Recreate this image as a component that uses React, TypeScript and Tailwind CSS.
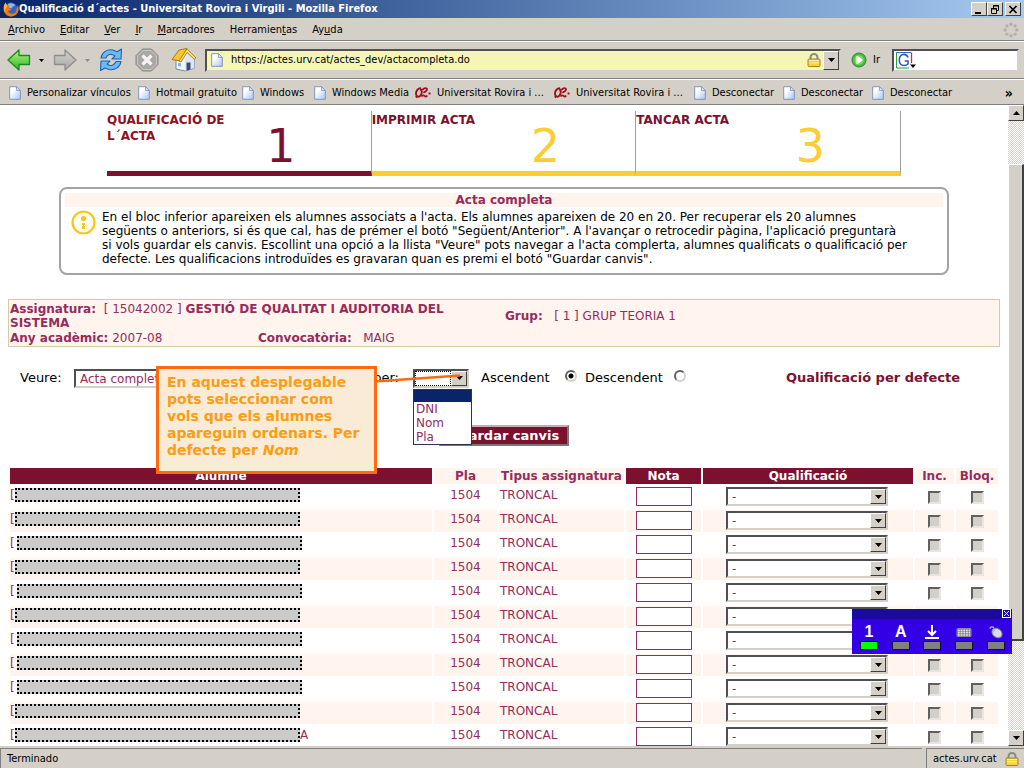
import React from "react";

const raised = "border border-t-white border-l-white border-r-[#404040] border-b-[#404040] bg-[#d4d0c8]";
const sunken = "border-2 border-t-[#505050] border-l-[#505050] border-r-[#d4d0c8] border-b-[#d4d0c8]";

function PageIcon() {
  return (
    <svg viewBox="0 0 12 14" className="h-[14px] w-3 shrink-0" aria-hidden="true">
      <defs>
        <linearGradient id="sheet" x1="0" y1="0" x2="1" y2="1">
          <stop offset="0.3" stopColor="#fff" />
          <stop offset="1" stopColor="#a9c4f2" />
        </linearGradient>
      </defs>
      <path d="M.7.7h6.8l3.8 3.8v8.8H.7z" fill="url(#sheet)" stroke="#7f93c4" strokeWidth="1" />
      <path d="M7.5.7v3.8h3.8z" fill="#dfe9fb" stroke="#7f93c4" strokeWidth=".8" />
    </svg>
  );
}

function UrvIcon() {
  return (
    <svg viewBox="0 0 16 12" className="h-3 w-4 shrink-0" fill="none" stroke="#a00f1c" aria-hidden="true">
      <path d="M6 1.2C3 1 .8 4 1 7c.2 3 3 3.500 4.500 1.500C7 6.500 7.500 2.500 5 2.200M.8 10.500l2-2" strokeWidth="1.900" />
      <path d="M7.500 3c1-2.300 4.700-2.500 4.500-.5-.2 1.800-2.500 2.800-3.700 3.200M6.500 9.500c1-1.500 2-1.500 3-.6s2 .8 2.700-.3M13.500 6.500h2" strokeWidth="1.800" />
    </svg>
  );
}

function LockIcon() {
  return (
    <svg viewBox="0 0 14 14" className="h-[14px] w-[14px] shrink-0" aria-hidden="true">
      <path d="M3.500 7V4.200a3.500 3.200 0 0 1 7 0V7" fill="none" stroke="#8a8a8a" strokeWidth="2" />
      <rect x="1" y="6" width="12" height="7.500" rx="1" fill="#f4d33c" stroke="#a8841a" />
      <path d="M2 7.500h10M2 9.800h10" stroke="#fdf0a0" strokeWidth="1" />
    </svg>
  );
}

function FirefoxIcon() {
  return (
    <svg viewBox="0 0 16 16" className="h-4 w-4 shrink-0" aria-hidden="true">
      <circle cx="8" cy="8" r="6.500" fill="#3a63b8" />
      <path d="M5 3c2-1 5-1 7 1-1 2-3 1-3 3-2 1-4 0-4-4z" fill="#8db9ee" />
      <path d="M2.500 1.500C0 5-.5 10 3 13.500c3.500 3.200 9 2.500 11.500-1.500 1.500-2.500 1.500-6 0-8.500.2 2-.3 3.500-1 4.500.2 3-2 5-4.800 4.800C6 12.500 5 11 5.200 9.500 6.500 10 8 9.500 8.500 8.500 6.500 8 5.500 6.500 6 5 4.500 4.500 3 3.500 2.500 1.500z" fill="#ef7a1a" />
      <path d="M2.500 1.500C.5 5 .5 9 2.500 11.500 2 8 3 6.500 4.500 5.500z" fill="#fbc02d" />
    </svg>
  );
}

function Caret({ dim }: { dim?: boolean }) {
  return (
    <svg viewBox="0 0 5 3" className="h-[3px] w-[5px] shrink-0" aria-hidden="true">
      <path d="M0 0h5L2.500 3z" fill={dim ? "#8d8a84" : "#000"} />
    </svg>
  );
}

function ArrowGlyph({ up }: { up?: boolean }) {
  return (
    <svg viewBox="0 0 7 4" className="h-1 w-[7px]" aria-hidden="true">
      <path d={up ? "M0 4h7L3.500 0z" : "M0 0h7L3.500 4z"} fill="#000" />
    </svg>
  );
}

function NavArrow({ back }: { back?: boolean }) {
  return (
    <svg viewBox="0 0 24 22" className="h-[22px] w-6" aria-hidden="true">
      <defs>
        <linearGradient id="green" x1="0" y1="0" x2="0" y2="1">
          <stop offset="0" stopColor="#b4f28c" />
          <stop offset="1" stopColor="#31b61e" />
        </linearGradient>
        <linearGradient id="grey" x1="0" y1="0" x2="0" y2="1">
          <stop offset="0" stopColor="#d2d0cc" />
          <stop offset="1" stopColor="#aaa8a4" />
        </linearGradient>
      </defs>
      {back ? (
        <path d="M1 11 12 1v5.500h10.500v9H12V21z" fill="url(#green)" stroke="#198a1c" strokeWidth="1.300" strokeLinejoin="round" />
      ) : (
        <path d="M23 11 12 1v5.500H1.500v9H12V21z" fill="url(#grey)" stroke="#8f8d89" strokeWidth="1.300" strokeLinejoin="round" />
      )}
    </svg>
  );
}

function ReloadIcon() {
  return (
    <svg viewBox="0 0 24 24" className="h-6 w-6" fill="#6bbcf5" stroke="#1f62b4" strokeWidth="1.100" strokeLinejoin="round" aria-hidden="true">
      <path d="M2 10C3 4 8 1 14 2l4 1.800L22.500 1 22 11H13l3-3.200C12 5 8 6.500 7 10z" />
      <path d="M22 13.500c-1 6-6.500 9-12 8L6 20l-4.500 2.500L2 13h9l-3 3.200c4 2.500 7.500 1 9-2.700z" />
    </svg>
  );
}

function StopIcon() {
  return (
    <svg viewBox="0 0 24 24" className="h-6 w-6" aria-hidden="true">
      <path d="M7.500 1h9L23 7.500v9L16.500 23h-9L1 16.500v-9z" fill="#a9a7a4" stroke="#8a8886" />
      <path d="M8 2.500h8L21.500 8v8L16 21.500H8L2.500 16V8z" fill="none" stroke="#c9c7c4" />
      <path d="m7.500 7.500 9 9m0-9-9 9" stroke="#f4f3f1" strokeWidth="3.200" />
    </svg>
  );
}

function HomeIcon() {
  return (
    <svg viewBox="0 0 26 24" className="h-6 w-[26px]" aria-hidden="true">
      <path d="M5 12v9l9 2 9.500-3V10L16 4z" fill="#f1f5fc" stroke="#7787a8" />
      <path d="m14 23 9.500-3V10L17 4l-3 6z" fill="#d6e1f3" opacity=".8" />
      <path d="M1 11.500 8 2l8-1.500-7 12.500z" fill="#f7c62e" stroke="#a97a12" strokeLinejoin="round" />
      <path d="M8 13 16 .8 25 10l-1.800 1.200L16 4.500 10 14z" fill="#fbe27a" stroke="#a97a12" strokeWidth=".9" strokeLinejoin="round" />
      <path d="M15.500 14.500h4v7l-4 1.300z" fill="#3e4c70" />
      <path d="M7 15h3v3.500l-3-.5z" fill="#8fb3e6" />
    </svg>
  );
}

function GoIcon() {
  return (
    <svg viewBox="0 0 16 16" className="h-4 w-4" aria-hidden="true">
      <circle cx="8" cy="8" r="7" fill="#4cb83c" stroke="#2a8a2a" />
      <circle cx="8" cy="8" r="4.800" fill="#7fd468" />
      <path d="M6 4.300 11 8l-5 3.700z" fill="#f6fff2" stroke="#f6fff2" strokeWidth="1.200" strokeLinejoin="round" />
    </svg>
  );
}

function GoogleIcon() {
  return (
    <svg viewBox="0 0 21 17" className="h-[17px] w-[21px] shrink-0" aria-hidden="true">
      <path d="M.5 16V.5H15" fill="none" stroke="#3a62c8" />
      <path d="M.5.5V16H13" fill="none" stroke="#2d9a3f" />
      <path d="M15.500.5V11" stroke="#d32f2f" strokeWidth="1.300" />
      <path d="M12 5.500C11 2.500 8.500 2.200 7 2.500 4.500 3 3.200 5.500 3.300 8.500c.2 3 2 5 4.700 5 1.800 0 3.200-.6 4-1.500V9H8.800" fill="none" stroke="#2a55c4" strokeWidth="1.500" />
      <path d="M14 12.500h6L17 16z" fill="#000" />
    </svg>
  );
}

function Throbber() {
  const dots = [0, 45, 90, 135, 180, 225, 270, 315];
  return (
    <svg viewBox="0 0 16 16" className="h-4 w-4" aria-hidden="true">
      {dots.map((a) => (
        <circle key={a} cx={8 + 5.8 * Math.cos((a * Math.PI) / 180)} cy={8 + 5.8 * Math.sin((a * Math.PI) / 180)} r="1.700" fill="#b3b0aa" />
      ))}
    </svg>
  );
}

function TitleBar() {
  const btn = "flex h-[14px] w-4 items-center justify-center " + raised;
  return (
    <header className="flex h-[18px] shrink-0 items-center bg-linear-to-r from-[#0a246a] to-[#a6caf0] px-[3px] text-white">
      <FirefoxIcon />
      <h1 className="flex-1 truncate font-bold">Qualificació d´actes - Universitat Rovira i Virgili - Mozilla Firefox</h1>
      <button aria-label="Minimitza" className={btn}>
        <svg viewBox="0 0 10 9" className="h-[9px] w-[10px]"><path d="M1 7h6v2H1z" fill="#000" /></svg>
      </button>
      <button aria-label="Restaura" className={btn}>
        <svg viewBox="0 0 10 9" className="h-[9px] w-[10px]" fill="none" stroke="#000">
          <path d="M3.500 3V.5h5v5H7M3 1h6M1.500 3.500h5v5h-5zM1 4h6" />
        </svg>
      </button>
      <button aria-label="Tanca" className={btn + " ml-0.5"}>
        <svg viewBox="0 0 10 9" className="h-[9px] w-[10px]"><path d="m1.500 1 7 7m0-7-7 7" stroke="#000" strokeWidth="1.700" /></svg>
      </button>
    </header>
  );
}

const menus: [string, string, string][] = [
  ["", "A", "rchivo"],
  ["", "E", "ditar"],
  ["", "V", "er"],
  ["", "I", "r"],
  ["", "M", "arcadores"],
  ["Herramien", "t", "as"],
  ["Ay", "u", "da"],
];

function MenuBar() {
  return (
    <nav className="flex h-[23px] shrink-0 items-center border-b border-[#808080] pt-0.5 pr-[5px] pl-2">
      <div className="flex flex-1 gap-[15px]">
        {menus.map(([a, b, c]) => (
          <button key={a + b + c}>
            {a}
            <span className="underline">{b}</span>
            {c}
          </button>
        ))}
      </div>
      <Throbber />
    </nav>
  );
}

function ToolBar() {
  return (
    <div className="flex h-[38px] shrink-0 items-center border-t border-b border-t-white border-b-[#808080] pr-[5px] pl-[7px]">
      <button aria-label="Enrere" className="flex items-center gap-2"><NavArrow back /><Caret /></button>
      <button aria-label="Endavant" className="ml-[9px] flex items-center gap-2"><NavArrow /><Caret dim /></button>
      <button aria-label="Actualitza" className="ml-[9px]"><ReloadIcon /></button>
      <button aria-label="Atura" className="ml-3"><StopIcon /></button>
      <button aria-label="Inici" className="ml-3"><HomeIcon /></button>
      <div className={"ml-2 flex h-[23px] flex-1 items-center bg-[#f5f5b5] pl-1 " + sunken}>
        <PageIcon />
        <input aria-label="Adreça" defaultValue="https://actes.urv.cat/actes_dev/actacompleta.do" className="ml-2 min-w-0 flex-1 bg-transparent outline-none" />
        <LockIcon />
        <button aria-label="Historial" className={"ml-0.5 flex h-[19px] w-4 items-center justify-center " + raised}><ArrowGlyph /></button>
      </div>
      <button className="ml-2.5 flex items-center gap-1.5"><GoIcon />Ir</button>
      <div className={"ml-3 flex h-[23px] w-[127px] items-center bg-white pl-0.5 " + sunken}>
        <GoogleIcon />
        <input aria-label="Cerca" className="min-w-0 flex-1 bg-transparent outline-none" />
      </div>
    </div>
  );
}

const bookmarks = [
  { label: "Personalizar vínculos", box: "w-[129px]" },
  { label: "Hotmail gratuito", box: "w-[104px]" },
  { label: "Windows", box: "w-[72px]" },
  { label: "Windows Media", box: "w-[101px]" },
  { label: "Universitat Rovira i ...", box: "w-[139px]", urv: true },
  { label: "Universitat Rovira i ...", box: "w-[140px]", urv: true },
  { label: "Desconectar", box: "w-[89px]" },
  { label: "Desconectar", box: "w-[89px]" },
  { label: "Desconectar", box: "w-[89px]" },
];

function BookmarksBar() {
  return (
    <nav className="flex h-[26px] shrink-0 items-center border-t border-b border-t-white border-b-[#808080] pt-0.5 pr-[11px] pl-[9px]">
      {bookmarks.map((b, i) => (
        <a key={i} href="#" className={"flex shrink-0 items-center gap-1.5 whitespace-nowrap " + b.box}>
          {b.urv ? <UrvIcon /> : <PageIcon />}
          {b.label}
        </a>
      ))}
      <button className="ml-auto text-sm font-bold" aria-label="Més adreces">»</button>
    </nav>
  );
}

const steps = [
  { title: ["QUALIFICACIÓ DE", "L´ACTA"], n: "1", bar: "border-b-[#7b112f]", head: "text-[#8e1222]", num: "text-[#7b112f]" },
  { title: ["IMPRIMIR ACTA"], n: "2", bar: "border-b-[#fccc33]", head: "text-[#7b112f]", num: "text-[#fccc33]" },
  { title: ["TANCAR ACTA"], n: "3", bar: "border-b-[#fccc33]", head: "text-[#7b112f]", num: "text-[#fccc33]" },
];

function Steps() {
  return (
    <ol className="mx-[107px] mt-1.5 grid grid-cols-3">
      {steps.map((s) => (
        <li key={s.n} className={"flex h-[65px] border-r border-b-[5px] border-r-[#a0a0a0] " + s.bar}>
          <h2 className={"w-[150px] pt-px text-xs leading-4 font-bold " + s.head}>
            {s.title.map((line) => <span key={line} className="block">{line}</span>)}
          </h2>
          <span className={"mt-3 w-12 text-center text-[46px] leading-[46px] " + s.num}>{s.n}</span>
        </li>
      ))}
    </ol>
  );
}

function InfoBox() {
  return (
    <section className="mx-[59px] mt-[11px] h-[88px] rounded-lg border-2 border-[#a3a3a3] px-1 pt-1">
      <h2 className="bg-[#fff5ee] text-center text-xs leading-[14px] font-bold text-[#952c5c]">Acta completa</h2>
      <div className="flex gap-1.5 pt-[3px] pl-1.5">
        <svg viewBox="0 0 25 25" className="h-[25px] w-[25px] shrink-0" aria-hidden="true">
          <circle cx="12.500" cy="12.500" r="11" fill="#fffdf4" stroke="#fcc612" strokeWidth="2.200" />
          <circle cx="12.500" cy="8.500" r="2.600" fill="#fcc612" />
          <path d="M11 13h3v2h-1v1h1v3h-3v-3h1v-1h-1z" fill="#fcc612" />
        </svg>
        <p className="text-xs leading-[14px] whitespace-nowrap">
          En el bloc inferior apareixen els alumnes associats a l'acta. Els alumnes apareixen de 20 en 20. Per recuperar els 20 alumnes
          <br />
          següents o anteriors, si és que cal, has de prémer el botó "Següent/Anterior". A l'avançar o retrocedir pàgina, l'aplicació preguntarà
          <br />
          si vols guardar els canvis. Escollint una opció a la llista "Veure" pots navegar a l'acta complerta, alumnes qualificats o qualificació per
          <br />
          defecte. Les qualificacions introduïdes es gravaran quan es premi el botó "Guardar canvis".
        </p>
      </div>
    </section>
  );
}

function CourseBox() {
  return (
    <section className="mx-2 mt-6 flex h-12 border border-[#d3cba6] bg-[#fff5ee] px-px text-xs text-[#952c5c]">
      <div className="w-[495px]">
        <p className="pt-0.5 leading-[14px]">
          <b>Assignatura:</b>&nbsp; [ 15042002 ] <b>GESTIÓ DE QUALITAT I AUDITORIA DEL<br />SISTEMA</b>
        </p>
        <div className="flex leading-4">
          <p className="w-[248px]"><b>Any acadèmic:</b> 2007-08</p>
          <p><b>Convocatòria:</b>&nbsp;&nbsp; MAIG</p>
        </div>
      </div>
      <p className="pt-2 leading-4"><b>Grup:</b>&nbsp;&nbsp; [ 1 ] GRUP TEORIA 1</p>
    </section>
  );
}

function DropButton() {
  return (
    <span className={"pointer-events-none absolute inset-y-0.5 right-0.5 flex w-4 items-center justify-center " + raised}>
      <ArrowGlyph />
    </span>
  );
}

function Filters() {
  return (
    <form className="relative" onSubmit={(e) => e.preventDefault()}>
      <div className="mt-5 flex h-[22px] items-center pl-5 text-[13px]">
        <label htmlFor="veure" className="w-[54px]">Veure:</label>
        <span className="relative w-[130px]">
          <select id="veure" className={"block h-[19px] w-full appearance-none bg-white pl-1 text-xs text-[#952c5c] " + sunken}>
            <option>Acta completa</option>
          </select>
          <DropButton />
        </span>
        <label htmlFor="ordre" className="w-[209px] pr-3.5 text-right">per:</label>
        <span className="relative w-14">
          <select id="ordre" className={"block h-[19px] w-full appearance-none bg-white " + sunken}>
            <option></option>
          </select>
          <span className="pointer-events-none absolute inset-y-0.5 right-[18px] left-0.5 border border-dotted border-black" />
          <DropButton />
          <ul className="absolute top-5 left-0 z-10 w-[59px] border border-[#303050] bg-white text-xs leading-[14px] text-[#952c5c]">
            <li className="h-3 bg-[#0a246a]" />
            <li className="pl-0.5">DNI</li>
            <li className="pl-0.5">Nom</li>
            <li className="pl-0.5">Pla</li>
          </ul>
        </span>
        <label htmlFor="asc" className="ml-3 w-[84px]">Ascendent</label>
        <Radio id="asc" on />
        <label htmlFor="desc" className="ml-2 w-[89px]">Descendent</label>
        <Radio id="desc" />
        <strong className="ml-auto pr-12 text-[#7b112f]">Qualificació per defecte</strong>
      </div>
      <div className="flex h-[77px] justify-center pt-9">
        <button className="h-[21px] w-[130px] border-2 border-t-[#c9a9b2] border-l-[#c9a9b2] border-r-[#777] border-b-[#777] bg-[#7b112f] text-[13px] leading-4 font-bold text-white">
          Guardar canvis
        </button>
      </div>
      <svg viewBox="0 0 86 12" className="absolute top-1 left-[375px] z-20 h-3 w-[86px]" aria-hidden="true">
        <path d="M0 10.500 85 4.500" stroke="#ff6a0d" strokeWidth="2.500" />
      </svg>
      <aside className="absolute top-0 left-[156px] z-20 -mt-px h-[108px] w-[221px] border-[3px] border-[#ff6a0d] bg-[#faebd7] px-2 pt-[5px] text-sm leading-[17px] font-bold text-[#fb9d15]">
        En aquest desplegable pots seleccionar com vols que els alumnes apareguin ordenars. Per defecte per <em>Nom</em>
      </aside>
    </form>
  );
}

function Radio({ id, on }: { id: string; on?: boolean }) {
  return (
    <input
      id={id}
      type="radio"
      name="sentit"
      defaultChecked={on}
      className="mb-1 h-3 w-3 appearance-none rounded-full border-2 border-t-[#606060] border-l-[#606060] border-r-[#d4d0c8] border-b-[#d4d0c8] bg-white checked:bg-[radial-gradient(#000_2px,#fff_3px)]"
    />
  );
}

const rows = [
  { shift: "ml-0" },
  { shift: "ml-0" },
  { shift: "ml-0.5" },
  { shift: "ml-0" },
  { shift: "ml-0.5" },
  { shift: "ml-0" },
  { shift: "ml-0.5" },
  { shift: "ml-0.5" },
  { shift: "ml-0.5" },
  { shift: "ml-0" },
  { shift: "ml-0", tail: "A" },
];

function Students() {
  const dark = "bg-[#7b112f] text-white";
  const light = "bg-[#fff5ee] text-[#952c5c]";
  const box = "block mx-auto h-[13px] w-[13px] appearance-none border-2 border-t-[#606060] border-l-[#606060] border-r-[#e8e6e0] border-b-[#e8e6e0] bg-[#d4d0c8]";
  return (
    <div className="mx-2">
      <table className="w-full table-fixed border-separate border-spacing-0.5 text-xs text-[#952c5c] [&_td]:p-0 [&_th]:p-0">
        <colgroup>
          <col />
          <col className="w-[63px]" />
          <col className="w-[125px]" />
          <col className="w-[75px]" />
          <col className="w-[210px]" />
          <col className="w-[39px]" />
          <col className="w-[42px]" />
        </colgroup>
        <thead>
          <tr className="h-4 leading-4">
            <th className={dark}>Alumne</th>
            <th className={light}>Pla</th>
            <th className={light}>Tipus assignatura</th>
            <th className={dark}>Nota</th>
            <th className={dark}>Qualificació</th>
            <th className={light}>Inc.</th>
            <th className={light}>Bloq.</th>
          </tr>
        </thead>
        <tbody>
          {rows.map((r, i) => (
            <tr key={i} className="h-[22px] [&:nth-child(even)>td]:bg-[#fff5ee]">
              <td className="align-top">
                <div className="flex h-[18px] items-center">
                  <span className="w-[5px]">[</span>
                  <span className={"h-[14px] w-[285px] border-2 border-dotted border-black bg-[#cbcbcb] " + r.shift} />
                  {r.tail && <span>{r.tail}</span>}
                </div>
              </td>
              <td className="text-center align-top leading-[18px]">1504</td>
              <td className="align-top leading-[18px]"><span className="ml-px">TRONCAL</span></td>
              <td className="align-top">
                <input aria-label={`Nota ${i + 1}`} className="mx-auto mt-px block h-[19px] w-14 border border-[#952c5c] bg-white px-1" />
              </td>
              <td className="align-top">
                <span className="relative mt-px ml-[23px] block w-[162px]">
                  <select aria-label={`Qualificació ${i + 1}`} className={"block h-[19px] w-full appearance-none bg-white pl-1 " + sunken}>
                    <option>-</option>
                  </select>
                  <DropButton />
                </span>
              </td>
              <td><input type="checkbox" aria-label={`Inc. ${i + 1}`} className={box} /></td>
              <td><input type="checkbox" aria-label={`Bloq. ${i + 1}`} className={box} /></td>
            </tr>
          ))}
        </tbody>
      </table>
    </div>
  );
}

function ScrollBar() {
  const track = "bg-[repeating-conic-gradient(#fff_0_25%,#d4d0c8_0_50%)] bg-[length:2px_2px]";
  const end = "flex h-4 shrink-0 items-center justify-center " + raised;
  return (
    <div className="flex w-4 shrink-0 flex-col">
      <button aria-label="Amunt" className={end}><ArrowGlyph up /></button>
      <div className={"flex-[43] " + track} />
      <div className={"flex-[477] " + raised + " border-r-2 border-b-2"} />
      <div className={"flex-[89] " + track} />
      <button aria-label="Avall" className={end}><ArrowGlyph /></button>
    </div>
  );
}

const keys = [
  { name: "Números", glyph: <span>1</span>, lamp: "bg-[#00ff00]" },
  { name: "Majúscules", glyph: <span>A</span>, lamp: "bg-[#808080]" },
  {
    name: "Desplaçament",
    glyph: <svg viewBox="0 0 16 14" className="h-[14px] w-4" fill="none" stroke="#fff" strokeWidth="2"><path d="M8 0v10M4 6l4 4 4-4M1 13h14" /></svg>,
    lamp: "bg-[#808080]",
  },
  {
    name: "Teclat",
    glyph: (
      <svg viewBox="0 0 16 12" className="h-3 w-4">
        <rect x=".5" y="2" width="15" height="9" rx="1.500" fill="#8a8a94" />
        <path d="M2 4.500h12M2 6.700h12M2 9h12" stroke="#e6e6ea" strokeWidth="1.300" strokeDasharray="1.700 1" />
      </svg>
    ),
    lamp: "bg-[#808080]",
  },
  {
    name: "Ratolí",
    glyph: (
      <svg viewBox="0 0 14 14" className="h-[14px] w-[14px]">
        <ellipse cx="8" cy="8" rx="5.500" ry="4.200" transform="rotate(38 8 8)" fill="#dcdce2" stroke="#8a8a94" />
        <path d="M1 4c0-3 3-2.500 4-1M4 7l3-3" stroke="#b9b9c4" strokeWidth="1.200" fill="none" />
      </svg>
    ),
    lamp: "bg-[#808080]",
  },
];

function KeyPanel() {
  return (
    <aside className="fixed right-3 bottom-[114px] z-30 h-[45px] w-40 bg-[#3300e6]">
      <div className="flex h-2.5 justify-end bg-[#1a0aa0] pr-px">
        <button aria-label="Tanca el tauler" className="h-[9px] w-[9px] border border-white">
          <svg viewBox="0 0 7 7" className="h-[7px] w-[7px]"><path d="m1 1 5 5m0-5L1 6" stroke="#fff" /></svg>
        </button>
      </div>
      <div className="grid grid-cols-5 pt-1 pl-px">
        {keys.map((k) => (
          <button key={k.name} aria-label={k.name} className="flex flex-col items-center">
            <span className="flex h-[18px] items-center font-['Liberation_Sans',sans-serif] text-base leading-4 font-bold text-white">{k.glyph}</span>
            <span className={"h-[9px] w-[18px] border border-[#101040] " + k.lamp} />
          </button>
        ))}
      </div>
    </aside>
  );
}

function StatusBar() {
  return (
    <footer className="flex h-[22px] shrink-0 border-t-2 border-t-[#d4d0c8] bg-[#d4d0c8]">
      <p className="flex-1 border-t border-l border-[#808080] pl-1.5 leading-5">Terminado</p>
      <p className="ml-1 flex w-[98px] items-center gap-2 border-t border-l border-[#808080] pl-1.5">
        actes.urv.cat
        <LockIcon />
      </p>
    </footer>
  );
}

export default function App() {
  return (
    <div className="flex h-screen flex-col overflow-hidden bg-[#d4d0c8] font-['DejaVu_Sans_Condensed','DejaVu_Sans',sans-serif] text-[11px] leading-4 text-black">
      <TitleBar />
      <MenuBar />
      <ToolBar />
      <BookmarksBar />
      <div className="flex min-h-0 flex-1">
        <main className="min-w-0 flex-1 overflow-hidden bg-white font-['DejaVu_Sans',sans-serif]">
          <Steps />
          <InfoBox />
          <CourseBox />
          <Filters />
          <Students />
        </main>
        <ScrollBar />
      </div>
      <StatusBar />
      <KeyPanel />
    </div>
  );
}
